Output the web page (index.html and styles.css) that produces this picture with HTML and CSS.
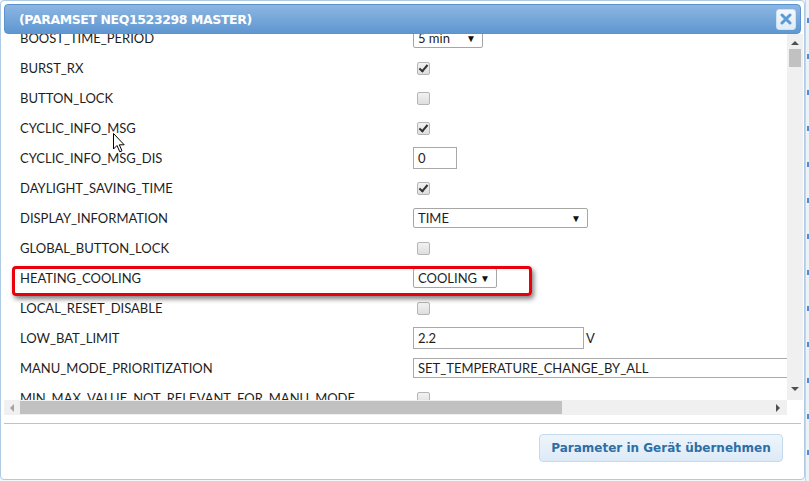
FILE: index.html
```html
<!DOCTYPE html>
<html>
<head>
<meta charset="utf-8">
<link rel="stylesheet" href="styles.css">
</head>
<body>
<div class="page">
  <div class="dialog">
    <div class="titlebar">
      <span class="title">(PARAMSET NEQ1523298 MASTER)</span>
      <span class="close"><svg width="12" height="12" viewBox="0 0 12 12"><path d="M2 2 L10 10 M10 2 L2 10" stroke="#5b9bd5" stroke-width="3" stroke-linecap="round"/></svg></span>
    </div>
    <div class="scrollarea">
      <div class="viewport">
        <div class="rows">
          <div class="row"><span class="label">BOOST_TIME_PERIOD</span><span class="ctrl"><span class="select w70">5 min<span class="arrow">&#9660;</span></span></span></div>
          <div class="row"><span class="label">BURST_RX</span><span class="ctrl"><span class="cb checked"></span></span></div>
          <div class="row"><span class="label">BUTTON_LOCK</span><span class="ctrl"><span class="cb"></span></span></div>
          <div class="row"><span class="label">CYCLIC_INFO_MSG</span><span class="ctrl"><span class="cb checked"></span></span></div>
          <div class="row"><span class="label">CYCLIC_INFO_MSG_DIS</span><span class="ctrl"><span class="input w44">0</span></span></div>
          <div class="row"><span class="label">DAYLIGHT_SAVING_TIME</span><span class="ctrl"><span class="cb checked"></span></span></div>
          <div class="row"><span class="label">DISPLAY_INFORMATION</span><span class="ctrl"><span class="select w175">TIME<span class="arrow">&#9660;</span></span></span></div>
          <div class="row"><span class="label">GLOBAL_BUTTON_LOCK</span><span class="ctrl"><span class="cb"></span></span></div>
          <div class="row"><span class="label">HEATING_COOLING</span><span class="ctrl"><span class="select w84">COOLING<span class="arrow">&#9660;</span></span></span></div>
          <div class="row"><span class="label">LOCAL_RESET_DISABLE</span><span class="ctrl"><span class="cb"></span></span></div>
          <div class="row"><span class="label">LOW_BAT_LIMIT</span><span class="ctrl"><span class="input w171">2.2</span><span class="unit">V</span></span></div>
          <div class="row"><span class="label">MANU_MODE_PRIORITIZATION</span><span class="ctrl"><span class="input wide">SET_TEMPERATURE_CHANGE_BY_ALL</span></span></div>
          <div class="row"><span class="label">MIN_MAX_VALUE_NOT_RELEVANT_FOR_MANU_MODE</span><span class="ctrl"><span class="cb"></span></span></div>
        </div>
      </div>
      <div class="vscroll">
        <span class="tri up"></span>
        <span class="vthumb"></span>
        <span class="vspace"></span>
        <span class="tri down"></span>
      </div>
      <div class="hscroll">
        <span class="tri left"></span>
        <span class="hthumb"></span>
        <span class="hspace"></span>
        <span class="tri right"></span>
      </div>
      <div class="corner"></div>
    </div>
    <div class="buttonpane">
      <span class="button">Parameter in Gerät übernehmen</span>
    </div>
    <div class="highlight"></div>
    <svg class="cursor" width="13" height="20" viewBox="0 0 13 20"><path d="M0.5 0.5 L0.5 16 L4 12.5 L6.8 18.8 L9 17.8 L6.3 11.8 L11.2 11.8 Z" fill="#fff" stroke="#000" stroke-width="1"/></svg>
  </div>
  <div class="behind"></div>
</div>
</body>
</html>
```
FILE: styles.css
```css
* { box-sizing: border-box; }
html, body { margin: 0; padding: 0; }
body {
  width: 809px;
  height: 481px;
  overflow: hidden;
  background: #f4f6f9;
  font-family: Lato, "Open Sans", sans-serif;
  color: #1e1e1e;
}
.page {
  display: flex;
  height: 481px;
}
.dialog {
  position: relative;
  width: 805px;
  height: 480px;
  border: 1px solid #aecbe6;
  border-radius: 4px;
  background: #fff;
  padding: 3px;
  display: flex;
  flex-direction: column;
}
.behind {
  flex: 1;
  background:
    repeating-linear-gradient(180deg, transparent 0 18px, #4f8fcf 18px 23px, transparent 23px 36px) 1px 0 / 3px 100% no-repeat,
    #eef2f6;
  border-left: 1px solid #c8d4e0;
}
.titlebar {
  height: 30px;
  border: 1px solid #5c93cd;
  border-radius: 4px;
  background: linear-gradient(#8db6e2, #5f97d1);
  display: flex;
  align-items: center;
  justify-content: space-between;
  padding: 0 4px 0 14px;
  flex: none;
}
.title {
  color: #fff;
  font-family: "DejaVu Sans", sans-serif;
  font-weight: bold;
  font-size: 12.5px;
  letter-spacing: -0.4px;
}
.close {
  width: 20px;
  height: 21px;
  border-radius: 3px;
  background: linear-gradient(#f4f8fc, #e0ecf8);
  border: 1px solid #cfe0f1;
  display: flex;
  align-items: center;
  justify-content: center;
}
.scrollarea {
  display: grid;
  grid-template-columns: 783px 16px;
  grid-template-rows: 366px 15px;
  flex: none;
}
.viewport {
  overflow: hidden;
  position: relative;
}
.rows {
  margin-top: -11px;
  width: 900px;
}
.row {
  height: 30px;
  display: flex;
  align-items: center;
  padding-left: 16px;
  font-size: 13px;
}
.label {
  width: 393px;
  flex: none;
  white-space: nowrap;
}
.ctrl {
  display: flex;
  align-items: center;
}
.cb {
  width: 13px;
  height: 13px;
  margin-left: 4px;
  border: 1px solid #b5b5b5;
  border-radius: 2px;
  background: linear-gradient(#f2f2f2, #dedede);
  position: relative;
}
.cb.checked::after {
  content: "";
  position: absolute;
  left: 3px;
  top: 0px;
  width: 3px;
  height: 7px;
  border: solid #333;
  border-width: 0 2px 2px 0;
  transform: rotate(40deg);
}
.select {
  height: 20px;
  border: 1px solid #a6a6a6;
  border-radius: 2px;
  background: #fff;
  display: flex;
  align-items: center;
  justify-content: space-between;
  padding: 0 6px 0 4px;
  font-size: 13px;
}
.arrow { font-size: 10px; color: #111; }
.w70 { width: 70px; }
.w175 { width: 175px; }
.w84 { width: 84px; }
.input {
  height: 22px;
  border: 1px solid #a9a9a9;
  background: #fff;
  display: flex;
  align-items: center;
  padding: 0 4px;
  font-size: 13px;
}
.w44 { width: 44px; }
.w171 { width: 171px; }
.input.wide { width: 420px; height: 20px; }
.unit { margin-left: 2px; }
.vscroll {
  background: #f0f0f0;
  display: flex;
  flex-direction: column;
  align-items: center;
  padding-top: 7px;
}
.vthumb {
  width: 12px;
  height: 18px;
  background: #c1c1c1;
  margin-top: 4px;
}
.vspace { flex: 1; }
.hscroll {
  background: #f0f0f0;
  display: flex;
  align-items: center;
  padding-left: 6px;
  padding-right: 7px;
}
.hthumb {
  width: 542px;
  height: 13px;
  background: #c1c1c1;
  margin-left: 6px;
}
.hspace { flex: 1; }
.corner { background: #fff; }
.tri { width: 0; height: 0; border-style: solid; }
.tri.up { border-width: 0 4px 4px 4px; border-color: transparent transparent #505050 transparent; }
.tri.down { border-width: 4px 4px 0 4px; border-color: #505050 transparent transparent transparent; margin-bottom: 9px; }
.tri.left { border-width: 4px 4px 4px 0; border-color: transparent #a3a3a3 transparent transparent; }
.tri.right { border-width: 4px 0 4px 4px; border-color: transparent transparent transparent #505050; }
.buttonpane {
  margin-top: 8px;
  border-top: 1px solid #a8c8e4;
  padding: 10px 18px 0 0;
  display: flex;
  justify-content: flex-end;
}
.button {
  width: 244px;
  height: 28px;
  border: 1px solid #c5dbec;
  border-radius: 4px;
  background: linear-gradient(#eef5fc, #dceaf7);
  color: #2e6ea5;
  font-family: "DejaVu Sans", sans-serif;
  font-weight: bold;
  font-size: 12px;
  display: flex;
  align-items: center;
  justify-content: center;
}
.highlight {
  position: absolute;
  left: 11px;
  top: 265px;
  width: 520px;
  height: 30px;
  border: 3px solid #e8000b;
  border-radius: 4px;
  box-shadow: 2px 3px 5px rgba(0,0,0,0.5);
}
.cursor {
  position: absolute;
  left: 112px;
  top: 132px;
}
```
